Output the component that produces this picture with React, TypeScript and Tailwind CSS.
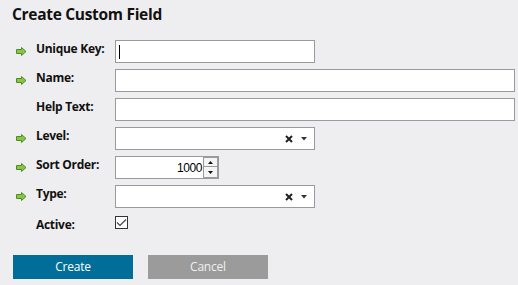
import React from "react";

const Arrow = () => (
  <svg width="11" height="9" viewBox="0 0 11 9" className="block">
    <path d="M0.5 2.5 H5.5 V0.5 L10 4.5 L5.5 8.5 V6.5 H0.5 Z" fill="#8bc34a" stroke="#4a8f1f" strokeWidth="1" strokeLinejoin="miter" />
  </svg>
);

const Row = ({ label, req, children }: { label: string; req?: boolean; children: React.ReactNode }) => (
  <div className="flex items-start h-[23px]">
    <div className="w-[103px] flex items-start shrink-0">
      <div className="w-[24px] pl-[4px] pt-[7px]">{req ? <Arrow /> : null}</div>
      <div className="text-[12px] leading-[16px] font-bold text-[#111] tracking-[-0.3px] pt-[1px]">{label}</div>
    </div>
    {children}
  </div>
);

const Input = ({ w, caret }: { w: string; caret?: boolean }) => (
  <div className={`${w} h-[23px] bg-white border border-[#9a9a9a] flex items-center pl-[3px]`}>
    {caret ? <div className="w-[1px] h-[14px] bg-black" /> : null}
  </div>
);

const Select = () => (
  <div className="w-[200px] h-[23px] bg-white border border-[#9a9a9a] flex items-center justify-end pr-[7px] gap-[8px]">
    <svg width="8" height="8" viewBox="0 0 8 8">
      <path d="M1 1 L7 7 M7 1 L1 7" stroke="#222" strokeWidth="2" />
    </svg>
    <svg width="6" height="4" viewBox="0 0 6 4">
      <path d="M0 0 H6 L3 3.5 Z" fill="#333" />
    </svg>
  </div>
);

export default function App() {
  return (
    <div className="w-[518px] h-[285px] bg-[#eeeef0] pl-[12px] pt-[4px]" style={{ fontFamily: '"Open Sans", "Noto Sans", sans-serif' }}>
      <div className="text-[15.5px] leading-[20px] font-bold text-[#111] tracking-[-0.3px]">Create Custom Field</div>
      <div className="mt-[16px] flex flex-col gap-[6px]">
        <Row label="Unique Key:" req>
          <Input w="w-[200px]" caret />
        </Row>
        <Row label="Name:" req>
          <Input w="w-[400px]" />
        </Row>
        <Row label="Help Text:">
          <Input w="w-[400px]" />
        </Row>
        <Row label="Level:" req>
          <Select />
        </Row>
        <Row label="Sort Order:" req>
          <div className="w-[104px] h-[23px] bg-white border border-[#9a9a9a] flex items-center justify-end">
            <span className="text-[12px] text-black tracking-[-0.4px] pr-[1px]" style={{ fontFamily: '"Liberation Sans", Arial, sans-serif' }}>1000</span>
            <div className="flex flex-col h-[21px] w-[15px] mr-[0px]">
              <div className="h-[10px] border border-[#9a9a9a] bg-[#f4f4f4] flex items-center justify-center">
                <svg width="5" height="3" viewBox="0 0 5 3"><path d="M0 3 H5 L2.5 0 Z" fill="#111" /></svg>
              </div>
              <div className="h-[11px] border border-[#9a9a9a] border-t-0 bg-[#f4f4f4] flex items-center justify-center">
                <svg width="5" height="3" viewBox="0 0 5 3"><path d="M0 0 H5 L2.5 3 Z" fill="#111" /></svg>
              </div>
            </div>
          </div>
        </Row>
        <Row label="Type:" req>
          <Select />
        </Row>
        <div className="flex items-start h-[23px]">
          <div className="w-[103px] flex items-start shrink-0">
            <div className="w-[24px]" />
            <div className="text-[12px] leading-[16px] font-bold text-[#111] tracking-[-0.3px] pt-[3px]">Active:</div>
          </div>
          <div className="mt-[2px] w-[13px] h-[13px] border border-[#333] bg-white flex items-center justify-center">
            <svg width="11" height="9" viewBox="0 0 11 9">
              <path d="M1 4.5 L4 7.5 L10 1.5" stroke="#444" strokeWidth="1.2" fill="none" />
            </svg>
          </div>
        </div>
      </div>
      <div className="mt-[18px] flex gap-[15px] pl-[1px]">
        <button className="w-[120px] h-[24px] bg-[#006e99] text-white text-[12px] tracking-[-0.2px]">Create</button>
        <button className="w-[120px] h-[24px] bg-[#9b9b9b] text-[#f0f0f0] text-[12px] tracking-[-0.2px]">Cancel</button>
      </div>
    </div>
  );
}
